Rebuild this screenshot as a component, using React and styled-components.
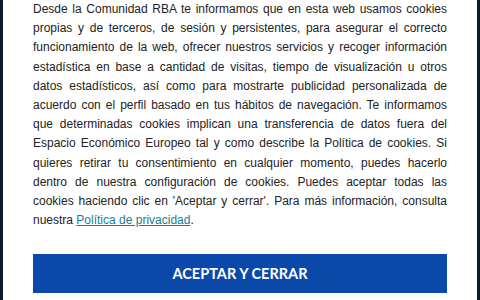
import React from "react";
import styled, { createGlobalStyle } from "styled-components";

const GlobalStyle = createGlobalStyle`
  html, body {
    margin: 0;
    padding: 0;
    background: #13243a;
    overflow: hidden;
  }
`;

const Backdrop = styled.div`
  width: 480px;
  height: 300px;
  display: flex;
  justify-content: center;
  background: linear-gradient(90deg, #0d1a2b 0%, #1d3350 50%, #0d1a2b 100%);
`;

const Modal = styled.div`
  width: 474px;
  background: #ffffff;
  padding: 0 30px;
  box-sizing: border-box;
`;

const Body = styled.p`
  margin: 0;
  font-family: "Liberation Sans", Arial, sans-serif;
  font-size: 12px;
  line-height: 19.2px;
  color: #222222;
  text-align: justify;
`;

const Link = styled.a`
  color: #1b7d8c;
  text-decoration: underline;
`;

const AcceptButton = styled.button`
  display: block;
  width: 100%;
  height: 39px;
  margin-top: 24px;
  border: none;
  background: #0a48a9;
  color: #ffffff;
  font-family: Lato, "Liberation Sans", sans-serif;
  font-weight: 700;
  font-size: 14.5px;
  cursor: pointer;
`;

export default function App() {
  return (
    <>
      <GlobalStyle />
      <Backdrop>
        <Modal>
          <Body>
            Desde la Comunidad RBA te informamos que en esta web usamos cookies
            propias y de terceros, de sesión y persistentes, para asegurar el
            correcto funcionamiento de la web, ofrecer nuestros servicios y
            recoger información estadística en base a cantidad de visitas,
            tiempo de visualización u otros datos estadísticos, así como para
            mostrarte publicidad personalizada de acuerdo con el perfil basado
            en tus hábitos de navegación. Te informamos que determinadas cookies
            implican una transferencia de datos fuera del Espacio Económico
            Europeo tal y como describe la Política de cookies. Si quieres
            retirar tu consentimiento en cualquier momento, puedes hacerlo
            dentro de nuestra configuración de cookies. Puedes aceptar todas las
            cookies haciendo clic en 'Aceptar y cerrar'. Para más información,
            consulta nuestra <Link href="#">Política de privacidad</Link>.
          </Body>
          <AcceptButton>ACEPTAR Y CERRAR</AcceptButton>
        </Modal>
      </Backdrop>
    </>
  );
}
